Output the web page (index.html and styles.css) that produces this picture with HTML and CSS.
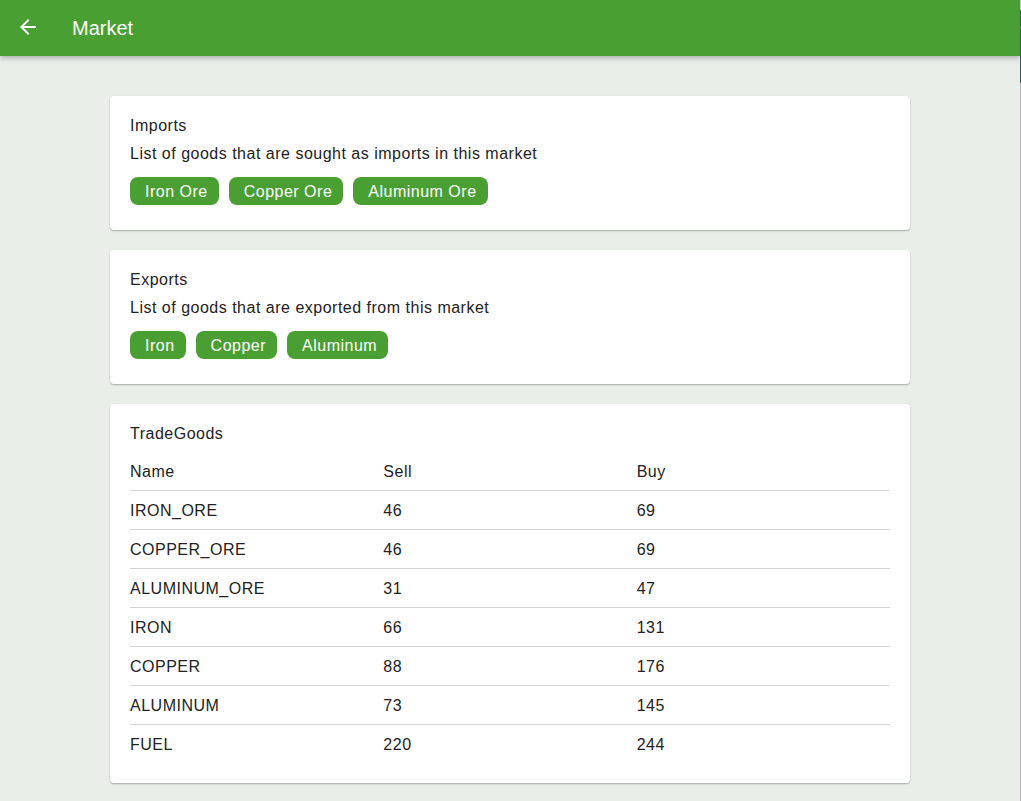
FILE: index.html
```html
<!DOCTYPE html>
<html lang="en">
<head>
<meta charset="utf-8">
<title>Market</title>
<link rel="stylesheet" href="styles.css">
</head>
<body>
<header class="appbar">
  <button class="back" aria-label="Back">
    <svg width="24" height="24" viewBox="0 0 24 24"><path fill="#fff" d="M20 11H7.83l5.59-5.59L12 4l-8 8 8 8 1.41-1.41L7.83 13H20v-2z"/></svg>
  </button>
  <h1 class="appbar-title">Market</h1>
</header>
<main class="content">
  <section class="card">
    <div class="card-title">Imports</div>
    <div class="card-desc">List of goods that are sought as imports in this market</div>
    <div class="chips">
      <span class="chip">Iron Ore</span>
      <span class="chip">Copper Ore</span>
      <span class="chip">Aluminum Ore</span>
    </div>
  </section>
  <section class="card">
    <div class="card-title">Exports</div>
    <div class="card-desc">List of goods that are exported from this market</div>
    <div class="chips">
      <span class="chip">Iron</span>
      <span class="chip">Copper</span>
      <span class="chip">Aluminum</span>
    </div>
  </section>
  <section class="card card-table">
    <div class="card-title">TradeGoods</div>
    <table class="goods">
      <thead>
        <tr><th>Name</th><th>Sell</th><th>Buy</th></tr>
      </thead>
      <tbody>
        <tr><td>IRON_ORE</td><td>46</td><td>69</td></tr>
        <tr><td>COPPER_ORE</td><td>46</td><td>69</td></tr>
        <tr><td>ALUMINUM_ORE</td><td>31</td><td>47</td></tr>
        <tr><td>IRON</td><td>66</td><td>131</td></tr>
        <tr><td>COPPER</td><td>88</td><td>176</td></tr>
        <tr><td>ALUMINUM</td><td>73</td><td>145</td></tr>
        <tr><td>FUEL</td><td>220</td><td>244</td></tr>
      </tbody>
    </table>
  </section>
</main>
<div class="edge"></div>
</body>
</html>
```
FILE: styles.css
```css
html, body {
  margin: 0;
  padding: 0;
}
body {
  background: #e9eee9;
  font-family: "Liberation Sans", Arial, sans-serif;
  color: #222;
  min-height: 801px;
  padding-right: 1px;
}
.appbar {
  height: 56px;
  background: #4a9f33;
  display: flex;
  align-items: center;
  box-shadow: 0 2px 4px -1px rgba(0,0,0,.2), 0 4px 5px 0 rgba(0,0,0,.1);
  position: relative;
}
.back {
  margin-left: 16px;
  width: 24px;
  height: 24px;
  padding: 0;
  border: 0;
  background: none;
  display: flex;
  margin-top: -2px;
}
.appbar-title {
  margin: 0 0 0 32px;
  font-size: 20px;
  font-weight: normal;
  color: #fff;
  line-height: 24px;
  margin-top: -1px;
}
.content {
  max-width: 800px;
  margin: 0 auto;
  padding-top: 40px;
  display: flex;
  flex-direction: column;
  gap: 20px;
}
.card {
  background: #fff;
  border-radius: 4px;
  box-shadow: 0 1px 2px rgba(0,0,0,.22), 0 1px 1px rgba(0,0,0,.08);
  padding: 18px 20px 25px;
  font-size: 16px;
  letter-spacing: 0.5px;
  height: 134px;
  box-sizing: border-box;
}
.card-title, .card-desc {
  line-height: 24px;
}
.card-desc {
  margin-top: 4px;
}
.chips {
  display: flex;
  gap: 10px;
  margin-top: 11px;
}
.chip {
  background: #4a9f33;
  color: #fff;
  height: 28px;
  line-height: 30px;
  border-radius: 8px;
  padding: 0 11px 0 15px;
  overflow: visible;
}
.card-table {
  height: auto;
  padding-bottom: 20px;
}
.goods {
  width: 100%;
  border-collapse: collapse;
  margin-top: 6px;
  table-layout: fixed;
}
.goods th, .goods td {
  text-align: left;
  font-weight: normal;
  padding: 2px 0 0;
  height: 36px;
  vertical-align: middle;
}
.goods thead tr, .goods tbody tr:not(:last-child) {
  border-bottom: 1px solid #d4d4d4;
}
.edge {
  position: fixed;
  top: 0;
  right: 0;
  width: 1px;
  height: 100%;
  background: linear-gradient(#c8c8c8 0, #c8c8c8 10px, #2d5d5a 10px, #2d5d5a 27px, #9aa 27px, #9aa 28px, #2d5d5a 28px, #2d5d5a 83px, #b5b5b5 83px);
}
```
